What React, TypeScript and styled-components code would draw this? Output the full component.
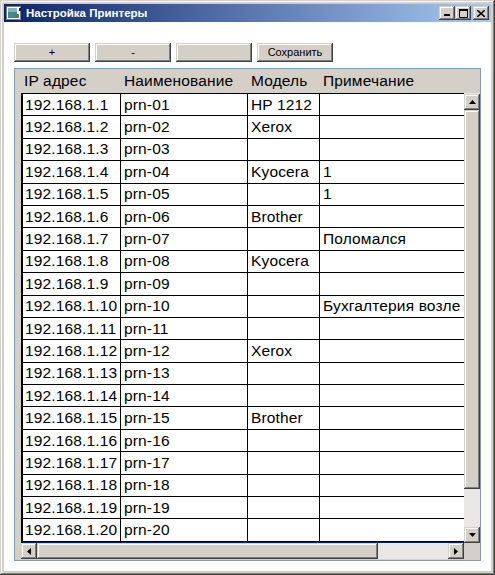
import * as React from "react";
import styled, { createGlobalStyle } from "styled-components";

const GlobalStyle = createGlobalStyle`
  html, body {
    margin: 0;
    padding: 0;
    background: #ffffff;
  }
  * {
    box-sizing: border-box;
  }
`;

const bevel = `
  box-shadow: inset -1px -1px #404040, inset 1px 1px #d4d0c8,
    inset -2px -2px #808080, inset 2px 2px #ffffff;
`;

const Window = styled.div`
  width: 495px;
  height: 575px;
  padding: 4px;
  background: #d4d0c8;
  display: flex;
  flex-direction: column;
  ${bevel}
`;

const TitleBar = styled.div`
  height: 18px;
  flex: none;
  display: flex;
  align-items: center;
  padding: 0 2px 0 2px;
  background: linear-gradient(to right, #0a246a, #a6caf0);
`;

const Title = styled.span`
  flex: 1;
  margin-left: 4px;
  color: #ffffff;
  font: bold 11.5px "Liberation Sans", Arial, sans-serif;
  white-space: nowrap;
`;

const CaptionButtons = styled.div`
  display: flex;
  align-items: center;
`;

const CaptionButton = styled.div<{ $gap?: boolean }>`
  width: 16px;
  height: 14px;
  margin-left: ${(p) => (p.$gap ? "2px" : "0")};
  background: #d4d0c8;
  display: flex;
  align-items: center;
  justify-content: center;
  ${bevel}
`;

const Client = styled.div`
  flex: 1;
  background: #ffffff;
  padding: 21px 10px 10px 10px;
  display: flex;
  flex-direction: column;
`;

const Toolbar = styled.div`
  display: flex;
  gap: 5px;
  flex: none;
`;

const ToolButton = styled.button`
  width: 76px;
  height: 19px;
  padding: 0 0 1px 0;
  border: none;
  background: #d4d0c8;
  color: #000000;
  font: 11px "Liberation Sans", Arial, sans-serif;
  ${bevel}
`;

const GridPanel = styled.div`
  margin-top: 6px;
  width: 467px;
  flex: 1;
  border: 1px solid #7f9db9;
  background: #d4d0c8;
  display: grid;
  grid-template-columns: 6px 443px 16px;
  grid-template-rows: 24px 450px 16px 1fr;
  overflow: hidden;
  font: 15.5px "Liberation Sans", Arial, sans-serif;
  letter-spacing: 0.15px;
  color: #000000;
`;

const COLS = "100px 127px 72px 144px";

const HeaderRow = styled.div`
  grid-column: 2 / 4;
  display: grid;
  grid-template-columns: ${COLS};
  align-items: center;
`;

const HeaderCell = styled.div`
  padding-left: 3px;
  padding-bottom: 1px;
  white-space: nowrap;
`;

const Body = styled.div`
  grid-column: 2;
  background: #ffffff;
  overflow: hidden;
`;

const Row = styled.div<{ $selected?: boolean }>`
  height: 22.4px;
  display: grid;
  grid-template-columns: ${COLS};
  border-top: 1px solid #000000;
  background: ${(p) => (p.$selected ? "#0a246a" : "#ffffff")};
`;

const Cell = styled.div`
  padding: 0 0 0 3px;
  border-right: 1px solid #000000;
  display: flex;
  align-items: center;
  white-space: nowrap;
  overflow: hidden;
  &:first-child {
    border-left: 2px solid #000000;
    padding-left: 2px;
  }
  &:last-child {
    border-right: none;
  }
`;

const VScroll = styled.div`
  grid-column: 3;
  background: #e9e7e3;
  display: flex;
  flex-direction: column;
  padding-top: 1px;
`;

const HScroll = styled.div`
  grid-column: 2;
  background: #e9e7e3;
  display: flex;
`;

const ArrowButton = styled.div`
  width: 16px;
  height: 16px;
  flex: none;
  background: #d4d0c8;
  display: flex;
  align-items: center;
  justify-content: center;
  ${bevel}
`;

const Thumb = styled.div<{ $size: number }>`
  flex: none;
  background: #d4d0c8;
  ${(p) => `flex-basis: ${p.$size}px;`}
  ${bevel}
`;

const Track = styled.div`
  flex: 1;
`;

const Arrow = ({ dir }: { dir: "up" | "down" | "left" | "right" }) => {
  const pts = {
    up: "3.5,0 7,4 0,4",
    down: "0,0 7,0 3.5,4",
    left: "4,0 4,7 0,3.5",
    right: "0,0 4,3.5 0,7",
  }[dir];
  const vertical = dir === "up" || dir === "down";
  return (
    <svg width={vertical ? 7 : 4} height={vertical ? 4 : 7} viewBox={vertical ? "0 0 7 4" : "0 0 4 7"}>
      <polygon points={pts} fill="#000" />
    </svg>
  );
};

const AppIcon = () => (
  <svg width="16" height="14" viewBox="0 0 16 14">
    <rect x="0.5" y="0.5" width="14" height="13" fill="#ffffff" stroke="#808080" />
    <rect x="2" y="2" width="9" height="10" fill="#3c8f86" />
    <rect x="2" y="2" width="9" height="4" fill="#7fb4c9" />
    <rect x="9" y="8" width="4" height="4" fill="#6d6d6d" />
    <rect x="13" y="2" width="2" height="3" fill="#202020" />
  </svg>
);

type Printer = { ip: string; name: string; model: string; note: string };

const printers: Printer[] = [
  { ip: "192.168.1.1", name: "prn-01", model: "HP 1212", note: "" },
  { ip: "192.168.1.2", name: "prn-02", model: "Xerox", note: "" },
  { ip: "192.168.1.3", name: "prn-03", model: "", note: "" },
  { ip: "192.168.1.4", name: "prn-04", model: "Kyocera", note: "1" },
  { ip: "192.168.1.5", name: "prn-05", model: "", note: "1" },
  { ip: "192.168.1.6", name: "prn-06", model: "Brother", note: "" },
  { ip: "192.168.1.7", name: "prn-07", model: "", note: "Поломался" },
  { ip: "192.168.1.8", name: "prn-08", model: "Kyocera", note: "" },
  { ip: "192.168.1.9", name: "prn-09", model: "", note: "" },
  { ip: "192.168.1.10", name: "prn-10", model: "", note: "Бухгалтерия возле" },
  { ip: "192.168.1.11", name: "prn-11", model: "", note: "" },
  { ip: "192.168.1.12", name: "prn-12", model: "Xerox", note: "" },
  { ip: "192.168.1.13", name: "prn-13", model: "", note: "" },
  { ip: "192.168.1.14", name: "prn-14", model: "", note: "" },
  { ip: "192.168.1.15", name: "prn-15", model: "Brother", note: "" },
  { ip: "192.168.1.16", name: "prn-16", model: "", note: "" },
  { ip: "192.168.1.17", name: "prn-17", model: "", note: "" },
  { ip: "192.168.1.18", name: "prn-18", model: "", note: "" },
  { ip: "192.168.1.19", name: "prn-19", model: "", note: "" },
  { ip: "192.168.1.20", name: "prn-20", model: "", note: "" },
];

export default function App() {
  return (
    <>
      <GlobalStyle />
      <Window>
        <TitleBar>
          <AppIcon />
          <Title>Настройка Принтеры</Title>
          <CaptionButtons>
            <CaptionButton>
              <svg width="8" height="8" viewBox="0 0 8 8">
                <rect x="1" y="5" width="6" height="2" fill="#000" />
              </svg>
            </CaptionButton>
            <CaptionButton>
              <svg width="9" height="9" viewBox="0 0 9 9">
                <path d="M0.5 1.5h8v7h-8z" fill="none" stroke="#000" />
                <rect x="0" y="0" width="9" height="2" fill="#000" />
              </svg>
            </CaptionButton>
            <CaptionButton $gap>
              <svg width="8" height="7" viewBox="0 0 8 7">
                <path d="M0 0l8 7M8 0L0 7" stroke="#000" strokeWidth="1.6" />
              </svg>
            </CaptionButton>
          </CaptionButtons>
        </TitleBar>
        <Client>
          <Toolbar>
            <ToolButton>+</ToolButton>
            <ToolButton>-</ToolButton>
            <ToolButton></ToolButton>
            <ToolButton>Сохранить</ToolButton>
          </Toolbar>
          <GridPanel>
            <div />
            <HeaderRow>
              <HeaderCell>IP адрес</HeaderCell>
              <HeaderCell>Наименование</HeaderCell>
              <HeaderCell>Модель</HeaderCell>
              <HeaderCell>Примечание</HeaderCell>
            </HeaderRow>
            <div />
            <Body>
              {printers.map((p) => (
                <Row key={p.ip}>
                  <Cell>{p.ip}</Cell>
                  <Cell>{p.name}</Cell>
                  <Cell>{p.model}</Cell>
                  <Cell>{p.note}</Cell>
                </Row>
              ))}
              <Row $selected>
                <Cell />
                <Cell />
                <Cell />
                <Cell />
              </Row>
            </Body>
            <VScroll>
              <ArrowButton>
                <Arrow dir="up" />
              </ArrowButton>
              <Thumb $size={379} />
              <Track />
              <ArrowButton>
                <Arrow dir="down" />
              </ArrowButton>
            </VScroll>
            <div />
            <HScroll>
              <ArrowButton>
                <Arrow dir="left" />
              </ArrowButton>
              <Thumb $size={341} />
              <Track />
              <ArrowButton>
                <Arrow dir="right" />
              </ArrowButton>
            </HScroll>
            <div />
          </GridPanel>
        </Client>
      </Window>
    </>
  );
}
